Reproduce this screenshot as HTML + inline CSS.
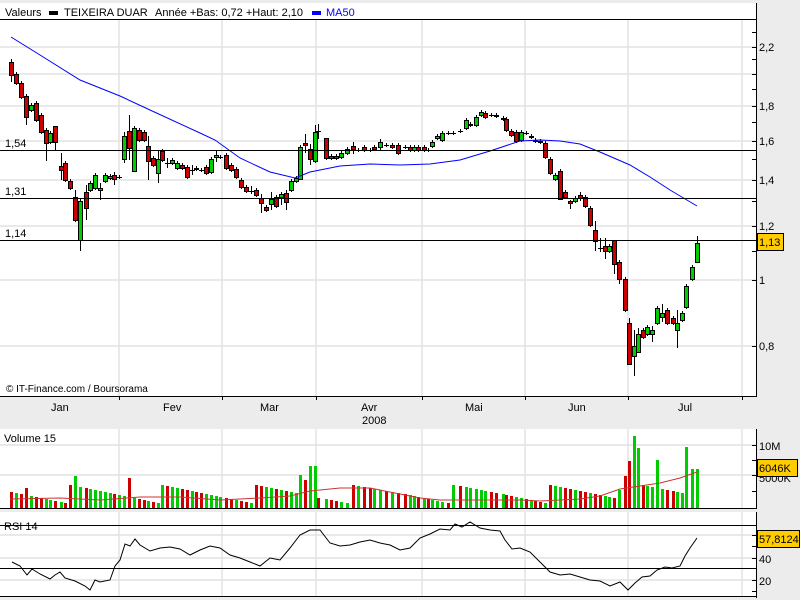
<!DOCTYPE html>
<html><head><meta charset="utf-8">
<style>
html,body{margin:0;padding:0;background:#ececec;width:800px;height:600px;overflow:hidden}
svg{position:absolute;left:0;top:0}
text{font-family:"Liberation Sans",sans-serif;font-size:11px;fill:#000}
</style></head><body>
<svg id="s" width="800" height="600" xmlns="http://www.w3.org/2000/svg">
<rect x="0" y="0" width="800" height="600" fill="#ececec"/>
<rect x="0" y="3" width="756" height="393" fill="#fff"/>
<rect x="0" y="429" width="756" height="79" fill="#fff"/>
<rect x="0" y="512" width="756" height="85" fill="#fff"/>
<g id="grid" stroke="#e2e2e2" stroke-width="1.5"></g>
<g id="main"></g>
<text x="5" y="16">Valeurs</text>
<rect x="49" y="11" width="9" height="4" fill="#000"/>
<text x="64" y="16">TEIXEIRA DUAR</text>
<text x="155" y="16">Année +Bas: 0,72 +Haut: 2,10</text>
<rect x="312" y="11" width="9" height="4" fill="#00f"/>
<text x="326" y="16" style="fill:#00f">MA50</text>
<line x1="0" y1="19.5" x2="756" y2="19.5" stroke="#000"/>
<line x1="0" y1="150.5" x2="756" y2="150.5" stroke="#000"/>
<line x1="0" y1="198.5" x2="756" y2="198.5" stroke="#000"/>
<line x1="0" y1="240.5" x2="756" y2="240.5" stroke="#000"/>
<text x="5" y="147">1,54</text>
<text x="5" y="195">1,31</text>
<text x="5" y="237">1,14</text>
<text x="6" y="392" style="font-size:10px">© IT-Finance.com / Boursorama</text>
<line x1="756.5" y1="3" x2="756.5" y2="397" stroke="#000"/>
<line x1="0" y1="396.5" x2="757" y2="396.5" stroke="#000"/>
<line x1="756.5" y1="429" x2="756.5" y2="509" stroke="#000"/>
<line x1="0" y1="508.5" x2="757" y2="508.5" stroke="#000"/>
<line x1="756.5" y1="512" x2="756.5" y2="598" stroke="#000"/>
<line x1="0" y1="596.5" x2="757" y2="596.5" stroke="#000"/>
<line x1="0" y1="525.5" x2="756" y2="525.5" stroke="#000"/>
<line x1="0" y1="568.5" x2="756" y2="568.5" stroke="#000"/>
<g id="ticks" stroke="#000"></g>
<text x="759" y="51">2,2</text>
<text x="759" y="110">1,8</text>
<text x="759" y="145">1,6</text>
<text x="759" y="184">1,4</text>
<text x="759" y="230">1,2</text>
<text x="759" y="284">1</text>
<text x="759" y="350">0,8</text>
<rect x="757.5" y="233.5" width="26" height="17" fill="#fc0" stroke="#000"/>
<text x="759" y="246">1,13</text>
<text x="51" y="411">Jan</text>
<text x="163" y="411">Fev</text>
<text x="260" y="411">Mar</text>
<text x="361" y="411">Avr</text>
<text x="465" y="411">Mai</text>
<text x="568" y="411">Jun</text>
<text x="678" y="411">Jul</text>
<text x="362" y="424">2008</text>
<text x="4" y="442">Volume 15</text>
<text x="759" y="450">10M</text>
<text x="759" y="482">5000K</text>
<rect x="757.5" y="459.5" width="40" height="17" fill="#fc0" stroke="#000"/>
<text x="759" y="472">6046K</text>
<text x="4" y="530">RSI 14</text>
<text x="759" y="563">40</text>
<text x="759" y="585">20</text>
<rect x="757.5" y="530.5" width="42" height="17" fill="#fc0" stroke="#000"/>
<text x="759" y="543">57,8124</text>
</svg>
<script>
var NS="http://www.w3.org/2000/svg";
function el(p,n,a){var e=document.createElementNS(NS,n);for(var k in a)e.setAttribute(k,a[k]);p.appendChild(e);return e;}
var g=document.getElementById('grid'),m=document.getElementById('main'),tk=document.getElementById('ticks');
[119,222,316,422,525,628,742].forEach(function(x){
 el(g,'line',{x1:x,y1:20,x2:x,y2:396});el(g,'line',{x1:x,y1:429,x2:x,y2:508});el(g,'line',{x1:x,y1:512,x2:x,y2:596});
 el(tk,'line',{x1:x+.5,y1:396,x2:x+.5,y2:400});});
[47,74,106,141,180,226,280,346].forEach(function(y){el(g,'line',{x1:0,y1:y,x2:756,y2:y});});
[445,475].forEach(function(y){el(g,'line',{x1:0,y1:y,x2:756,y2:y});});
[535,558,580].forEach(function(y){el(g,'line',{x1:0,y1:y,x2:756,y2:y});});
[32,47,59,74,89,106,122,141,159,180,201,226,251,280,346].forEach(function(y){el(tk,'line',{x1:752,y1:y+.5,x2:756,y2:y+.5});});
[445,460,475,491].forEach(function(y){el(tk,'line',{x1:752,y1:y+.5,x2:756,y2:y+.5});});
[525,535,546,558,568,580,591].forEach(function(y){el(tk,'line',{x1:752,y1:y+.5,x2:756,y2:y+.5});});
var GREEN=[31,50,80,90,95,100,105,110,124,134,158,172,177,211,216,271,281,291,296,300,315,341,347,380,414,432,437,442,466,476,481,521,555,575,609,634,638,647,652,657,662,677,682,686,692,697];
var C=[[11,62,75,59,82],[16,74,83],[21,83,97],[26,96,117,94,125],[31,105,110],[36,103,120],[41,115,132],[46,130,143,128,161],[50,133,142],[55,126,142,126,150],[61,166,170,153,180],[65,163,180],[70,181,188],[75,197,220,190,222],[80,201,240,198,251],[86,192,208,185,220],[90,183,190],[95,175,188],[100,188,190,183,200],[105,175,181],[110,176,178],[114,175,179,172,185],[119,177,177],
[124,136,159,132,163],[129,131,148,115,160],[134,128,171,126,171],[139,130,140],[144,132,140],[148,146,161,136,180],[153,158,165],[158,159,173,150,183],[162,151,160],[167,163,163,158,168],[172,160,163],[177,163,168],[182,165,168],[187,167,177],[192,170,170,165,175],[196,169,168],[201,170,170],[206,167,173],[211,159,172],[216,155,157,150,162],[220,157,157],[226,155,168],[231,165,170],[236,169,177],[241,180,187],
[246,187,191],[251,191,191,186,194],[256,190,195],[261,198,203,194,213],[266,207,210],[271,199,204,192,210],[276,197,206],[281,194,197,192,205],[286,193,202,190,210],[291,181,190],[296,178,181],[300,147,179,145,180],[305,143,145,134,153],[310,149,159,144,165],[315,132,161,125,163],[318,131,131,124,139],[326,138,158,138,160],[331,156,158],[336,156,158],[341,153,157],[347,149,153],[353,146,149,142,154],[358,150,150],[364,147,150],[370,150,150],[374,147,149],[380,142,147,139,150],[386,145,145],[392,145,147],[398,145,153],[405,147,147],[410,147,150],[414,147,150],[418,147,150],[424,147,150],[428,150,150],[432,142,146],[437,136,138],[442,133,140],[448,133,133],[453,133,133],[460,131,131],[466,120,128],[470,124,125],[476,117,125],[481,112,115],[485,113,117],[491,115,115],[496,115,116],[503,118,119],[506,119,130],[511,131,135],[516,132,141],[521,132,140],[526,133,133],[531,136,137],[535,140,141],[540,141,142],
[545,143,157],[550,159,173],[555,175,179],[560,171,199,169,200],[565,192,197],[570,201,203,200,209],[575,198,201],[580,195,198,192,201],[585,197,206],[590,208,225],[595,230,241,221,251],[600,248,248,238,252],[605,246,251,238,259],[609,246,251],[614,240,264,240,274],[619,262,279,260,284],[625,279,310],[629,323,364,318,364],[634,346,356,330,376],[638,334,352,328,352],[643,330,337],[647,327,334],[652,330,334,326,342],[657,308,323],[662,313,317,304,322],[667,310,323],[673,318,323],[677,323,330,310,348],[682,313,320],[686,286,307],[692,267,279],[697,243,262,236,262]];
C.forEach(function(c,i){
 var x=c[0],o=c[1],cl=c[2],h=c[3]!==undefined?c[3]:Math.min(o,cl)-2,l=c[4]!==undefined?c[4]:Math.max(o,cl)+2;
 var gr=GREEN.indexOf(x)>=0;
 el(m,'line',{x1:x+.5,y1:h,x2:x+.5,y2:l,stroke:'#000'});
 var top=Math.min(o,cl),bh=Math.abs(cl-o);
 if(bh<1){el(m,'line',{x1:x-2,y1:top+.5,x2:x+3,y2:top+.5,stroke:'#000'});}
 else el(m,'rect',{x:x-1.5,y:top+.5,width:4,height:bh,fill:gr?'#0c0':'#c00',stroke:'#000'});
});
function pl(p,pts,col){el(m,'polyline',{points:pts.map(function(a){return a.join(',')}).join(' '),fill:'none',stroke:col,'stroke-width':1});}
pl(m,[[11,37],[40,55],[80,80],[120,96],[150,110],[200,133],[215,140],[240,158],[270,172],[295,178],[310,172],[340,166],[370,164],[400,165],[430,164],[460,160],[490,151],[520,141],[540,140],[560,141],[580,144],[600,152],[630,165],[650,177],[670,190],[697,206]],'#00f');
C.forEach(function(c,i){
 var h=5+((i*37+11)%19);
 var x=c[0];
 if(x>=300&&x<=306)h=33;if(x>=310&&x<=316)h=42;if(x==305)h=28;
 if(x==633||x==634)h=72;if(x==638)h=60;if(x==629)h=47;if(x==657)h=48;if(x==686)h=61;if(x==692||x==697)h=39;if(x==625)h=32;if(x==619)h=18;
 if(x==75)h=32;if(x==129)h=30;if(x==26)h=20;
 var gr=GREEN.indexOf(x)>=0||(i%3==1);
 el(m,'rect',{x:x-1,y:508-h,width:3,height:h,fill:gr?'#0c0':'#c00'});
});
pl(m,[[10,499],[60,498],[100,500],[140,497],[180,497],[220,500],[260,498],[290,496],[310,491],[340,488],[370,488],[380,490],[400,494],[420,498],[440,500],[480,500],[520,500],[540,501],[560,500],[580,499],[600,496],[620,489],[640,486],[660,483],[680,478],[697,472]],'#c33');
pl(m,[[12,562],[20,566],[27,575],[32,569],[40,574],[50,579],[55,575],[60,572],[65,578],[75,581],[85,586],[90,590],[95,580],[100,582],[110,580],[115,566],[120,560],[125,544],[130,546],[135,539],[140,545],[150,551],[160,548],[170,547],[180,549],[190,555],[200,550],[210,546],[220,548],[230,555],[240,558],[250,562],[260,566],[270,558],[280,560],[290,548],[300,535],[310,530],[320,530],[330,543],[340,546],[350,545],[360,542],[370,540],[380,543],[390,545],[400,550],[410,548],[420,538],[430,534],[440,529],[450,530],[455,524],[462,527],[470,522],[480,528],[490,530],[500,531],[505,540],[512,549],[520,548],[530,552],[540,562],[550,572],[560,575],[570,574],[580,577],[590,580],[600,581],[610,586],[620,582],[628,590],[635,583],[642,577],[650,576],[657,570],[665,567],[672,568],[680,566],[685,556],[690,548],[697,538]],'#000');
</script>
</body></html>
